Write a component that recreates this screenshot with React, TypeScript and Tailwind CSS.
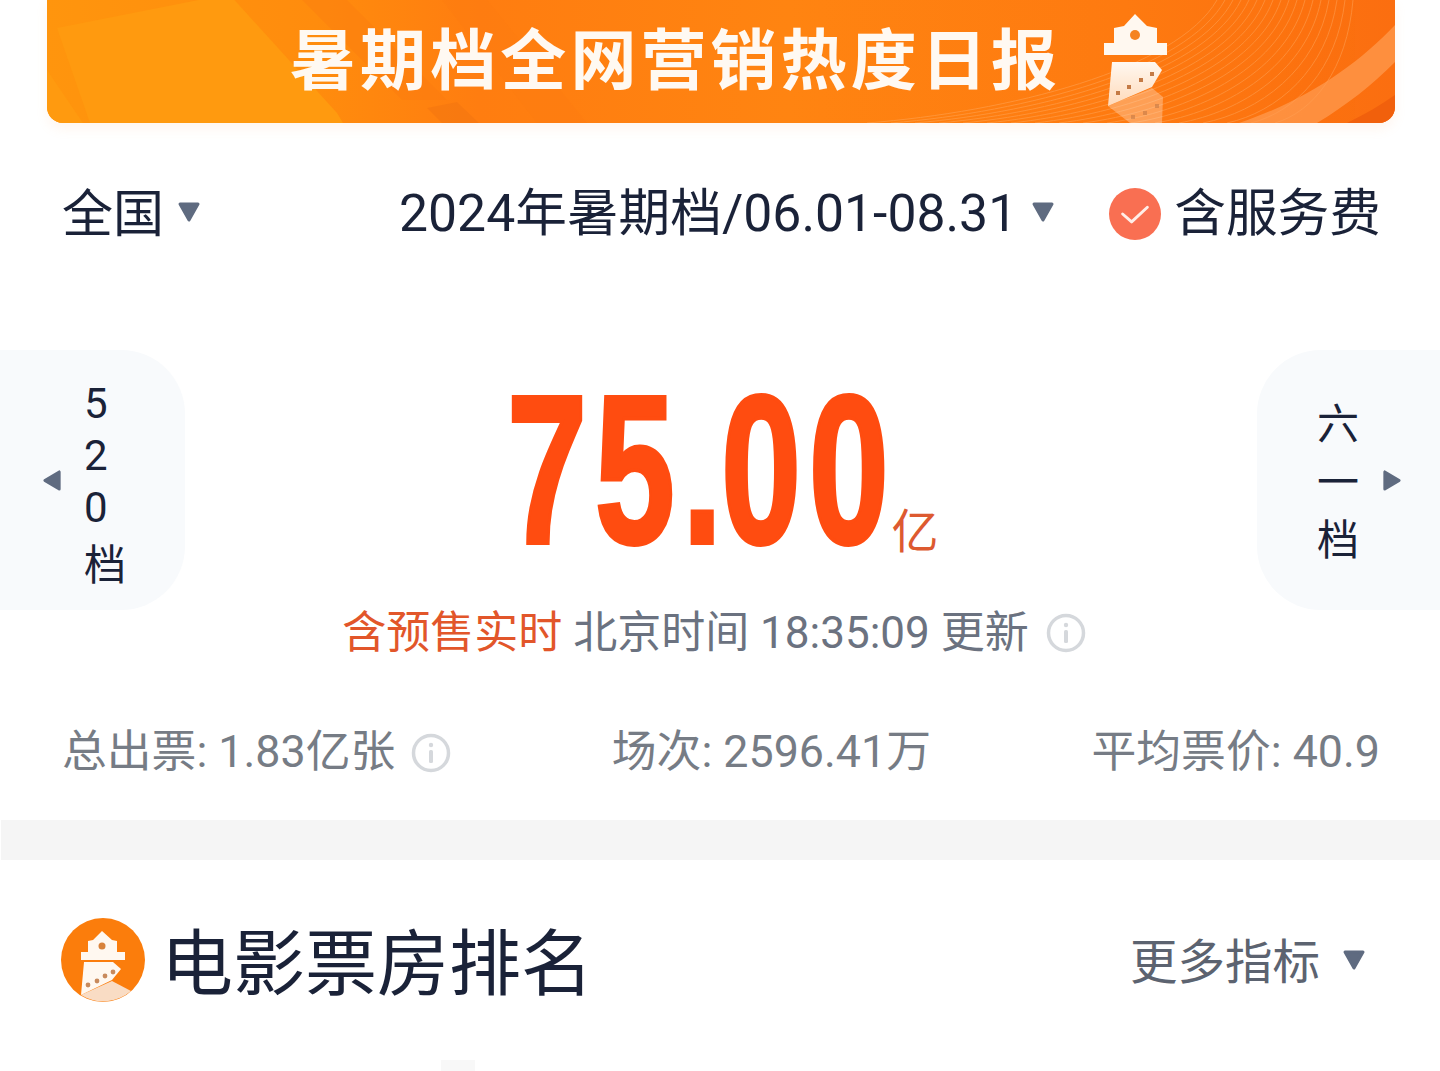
const fontStack = { fontFamily: 'Roboto, "Noto Sans CJK SC", sans-serif' };

const fanLines = [0, 1, 2, 3, 4, 5, 6, 7, 8, 9, 10, 11, 12, 13, 14, 15, 16, 17];

const Triangle = ({ dir, className }: { dir: "down" | "left" | "right"; className: string }) => {
	const points = { down: "3,4 21,4 12,20", left: "19,3 19,21 4,12", right: "5,3 5,21 20,12" }[dir];
	return (
		<svg viewBox="0 0 24 24" className={`shrink-0 ${className}`}>
			<polygon points={points} fill="#5f6b80" stroke="#5f6b80" strokeWidth="3" strokeLinejoin="round" />
		</svg>
	);
};

const InfoIcon = () => (
	<svg viewBox="0 0 40 40" className="w-10 h-10 shrink-0">
		<circle cx="20" cy="20" r="17.5" fill="none" stroke="#d5d8dc" strokeWidth="3.5" />
		<circle cx="20" cy="12" r="2.2" fill="#d5d8dc" />
		<rect x="18" y="17" width="4" height="13" rx="1.5" fill="#d5d8dc" />
	</svg>
);

const BannerArt = () => (
	<svg viewBox="0 0 1348 123" preserveAspectRatio="none" className="absolute inset-0 w-full h-full">
		<defs>
			<linearGradient id="bg" x1="0" x2="1" y1="0" y2="0">
				<stop offset="0" stopColor="#ff950d" />
				<stop offset="0.2" stopColor="#ff8c0d" />
				<stop offset="0.32" stopColor="#ff7d10" />
				<stop offset="0.55" stopColor="#ff8411" />
				<stop offset="0.8" stopColor="#fe7a10" />
				<stop offset="1" stopColor="#fb6e10" />
			</linearGradient>
			<linearGradient id="film" x1="0" x2="0" y1="0" y2="1">
				<stop offset="0" stopColor="#fff8f0" />
				<stop offset="1" stopColor="#ffd9b8" />
			</linearGradient>
		</defs>
		<rect width="1348" height="123" fill="url(#bg)" />
		<polygon points="10,28 182,-6 290,113 296,123 43,123" fill="#ff9a0f" />
		<polygon points="0,70 36,123 0,123" fill="#ff9a0f" />
		<polygon points="395,0 440,0 540,123 490,123" fill="#fb7a12" opacity="0.35" />
		<polygon points="255,0 300,0 400,100 355,100" fill="#f9760f" opacity="0.3" />
		<polygon points="380,108 410,102 432,123 395,123" fill="#f27410" opacity="0.55" />
		<g fill="none" stroke="#ffb36e" strokeWidth="1" opacity="0.4">
			{fanLines.map((i) => (
				<path key={i} d={`M${820 + i * 24} 123C${960 + i * 18} 112 ${1130 + i * 10} 70 ${1170 + i * 8} 0`} />
			))}
		</g>
		<path d="M1192 123C1260 100 1310 65 1348 25V62C1325 85 1300 105 1270 123Z" fill="#ff9c52" opacity="0.7" />
		<path d="M1300 123C1318 114 1334 105 1348 95V123Z" fill="#f1600c" />
		<g transform="translate(1057 14)">
			<path d="M31 0L43 12L53 14V29H63V41H0V29H10V14L20 12Z" fill="#fff8f0" />
			<circle cx="31" cy="21" r="5" fill="#f58320" />
			<path d="M8 48H51L58 56L48 73L4 92Z" fill="url(#film)" />
			<path d="M4 92L48 74L59 83L58 109H26Z" fill="#ffe9d6" opacity="0.35" />
			<g fill="#c47a45">
				<rect x="12" y="77" width="4" height="4" />
				<rect x="23" y="71" width="4" height="4" />
				<rect x="35" y="64" width="4" height="4" />
				<rect x="46" y="58" width="4" height="4" />
				<rect x="27" y="101" width="4" height="4" opacity="0.6" />
				<rect x="39" y="97" width="4" height="4" opacity="0.6" />
				<rect x="51" y="90" width="4" height="4" opacity="0.6" />
			</g>
		</g>
	</svg>
);

const LogoBadge = () => (
	<svg viewBox="0 0 84 84" className="w-[84px] h-[84px] shrink-0">
		<circle cx="42" cy="42" r="42" fill="#fb7d0c" />
		<path d="M20 77L51 63L70 73A42 42 0 0 1 20 77Z" fill="#f9dcc4" />
		<path d="M23 44H52L60 51L51 62L20 77Z" fill="#fff8f0" />
		<path d="M41 13L51 22L56 23V34H64V42H20V34H27V23L32 22Z" fill="#fff8f0" />
		<circle cx="41" cy="28" r="3.5" fill="#d8823a" />
		<g fill="#c88a5c">
			<circle cx="27" cy="67" r="2.4" />
			<circle cx="36" cy="63" r="2.4" />
			<circle cx="44" cy="58" r="2.4" />
			<circle cx="52" cy="54" r="2.4" />
		</g>
	</svg>
);

export default function App() {
	return (
		<div className="w-[1440px] h-[1071px] overflow-hidden bg-white" style={fontStack}>
			{/* Banner */}
			<div className="pl-[47px] pr-[45px]">
				<div className="relative h-[123px] rounded-b-2xl overflow-hidden shadow-[0_6px_12px_rgba(255,180,120,0.12)]">
					<BannerArt />
					<div className="relative h-full pl-[243px] flex items-center text-[66px] leading-none font-bold tracking-[4.1px] text-[#fff9f2] whitespace-nowrap">
						暑期档全网营销热度日报
					</div>
				</div>
			</div>

			{/* Filters */}
			<div className="mt-[61px] h-[60px] pl-[62px] flex items-center text-[51.7px] leading-none text-[#1a2238] whitespace-nowrap">
				<span className="text-[51px]">全国</span>
				<Triangle dir="down" className="ml-[13px] w-[24px] h-[24px] mb-1" />
				<span className="ml-[198px]">2024年暑期档/06.01-08.31</span>
				<Triangle dir="down" className="ml-[14px] w-[24px] h-[24px] mb-1" />
				<div className="ml-[54px] w-[52px] h-[52px] rounded-full bg-[#f96f52] flex items-center justify-center shrink-0">
					<svg viewBox="0 0 32 32" className="w-9 h-9">
						<path d="M5 16L13 23L27 10" fill="none" stroke="#ffeee8" strokeWidth="2.6" strokeLinecap="round" strokeLinejoin="round" />
					</svg>
				</div>
				<span className="ml-[13px]">含服务费</span>
			</div>

			{/* Hero */}
			<div className="mt-[106px] h-[260px] flex justify-between items-stretch text-[#1a2238]">
				<div className="w-[185px] bg-[#f8fafc] rounded-r-[64px] flex items-center pl-[41px]">
					<Triangle dir="left" className="w-[23px] h-[23px]" />
					<div className="ml-[20px] flex flex-col text-[42px] leading-[52px] pt-[14px]">
						<span>5</span>
						<span>2</span>
						<span>0</span>
						<span className="leading-[60px] mt-[2px]">档</span>
					</div>
				</div>

				<div className="flex items-end pb-[57px]">
					<div className="w-[388px] h-[160px] relative">
						<span className="absolute left-[3px] bottom-[-23px] origin-bottom-left scale-x-[0.68] text-[212px] leading-none font-bold text-[#ff4c10] tracking-[11px] whitespace-nowrap font-['Liberation_Sans'] [-webkit-text-stroke:4px_#ff4c10]">
							75<span className="tracking-[-2px]">.</span>0<span className="tracking-normal">0</span>
						</span>
					</div>
					<span className="text-[47px] leading-none text-[#dd5a30] mb-[-2px]">亿</span>
				</div>

				<div className="w-[183px] bg-[#f8fafc] rounded-l-[64px] flex items-center pl-[60px]">
					<div className="flex flex-col text-[42px] leading-[58px] pt-[5px]">
						<span>六</span>
						<span>一</span>
						<span>档</span>
					</div>
					<Triangle dir="right" className="ml-[21px] w-[23px] h-[23px]" />
				</div>
			</div>

			{/* Update time */}
			<div className="h-[44px] pt-[2px] flex items-center justify-center gap-[17px] pr-[12px] text-[44px] leading-none text-[#6b7280] whitespace-nowrap">
				<span>
					<span className="text-[#e2562a]">含预售实时</span> 北京时间 18:35:09 更新
				</span>
				<InfoIcon />
			</div>

			{/* Stats */}
			<div className="mt-[76px] h-[44px] pt-[1px] pl-[62px] pr-[60px] flex items-center justify-between text-[44.8px] leading-none text-[#767c85] whitespace-nowrap">
				<div className="flex items-center gap-[16px]">
					<span>总出票: 1.83亿张</span>
					<InfoIcon />
				</div>
				<span>场次: 2596.41万</span>
				<span>平均票价: 40.9</span>
			</div>

			<div className="mt-[46px] h-[40px] bg-[#f5f5f5] ml-px" />

			{/* Ranking header */}
			<div className="mt-[58px] h-[84px] pl-[61px] pr-[74px] flex items-center justify-between whitespace-nowrap">
				<div className="flex items-center gap-[16px]">
					<LogoBadge />
					<span className="text-[72px] leading-none text-[#1a2238] pt-[10px]">电影票房排名</span>
				</div>
				<div className="flex items-center gap-[22px] text-[47.5px] leading-none text-[#5c6370]">
					<span className="pt-[7px]">更多指标</span>
					<Triangle dir="down" className="w-[24px] h-[24px]" />
				</div>
			</div>

			{/* top edge of the next row, cut off by the window */}
			<div className="mt-[58px] ml-[441px] w-[34px] h-[11px] bg-[#f8f8f8]" />
		</div>
	);
}
